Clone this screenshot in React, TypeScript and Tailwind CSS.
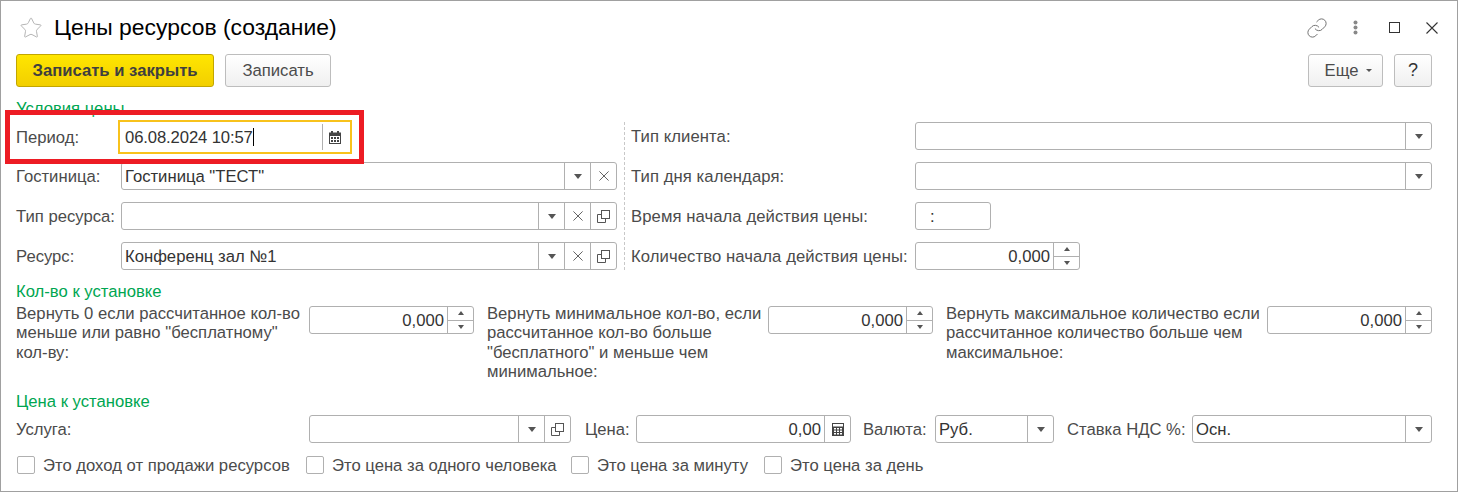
import { Link, Star } from 'lucide-react';

const Caret = () => (
  <svg width="8" height="5" viewBox="0 0 8 5">
    <path d="M0 0h8L4 5z" fill="#555" />
  </svg>
);

const Cross = ({ size, color }: { size: number; color: string }) => (
  <svg width={size} height={size} viewBox="0 0 12 12" fill="none" stroke={color} strokeWidth="1.100">
    <path d="M0.500 0.500l11 11M11.500 0.500l-11 11" />
  </svg>
);

const CopyIcon = () => (
  <svg width="13" height="13" viewBox="0 0 13 13" fill="none" stroke="#555" strokeWidth="1">
    <rect x="4.5" y="0.5" width="8" height="8" />
    <path d="M4.5 4.5h-4v8h8v-4" />
  </svg>
);

const CalendarIcon = () => (
  <svg width="12" height="13" viewBox="0 0 12 13">
    <path
      fill="#444"
      fillRule="evenodd"
      d="M2 0h2v1.500h4V0h2v1.500h2V13H0V1.500h2zM1 5v7h10V5zM2 6h2v2H2zM5 6h2v2H5zM8 6h2v2H8zM2 9h2v2H2zM5 9h2v2H5zM8 9h2v2H8z"
    />
  </svg>
);

const CalcIcon = () => (
  <svg width="12" height="13" viewBox="0 0 12 13">
    <path
      fill="#444"
      fillRule="evenodd"
      d="M0 0h12v13H0zM1 1v2.500h10V1zM2 5h2v1.500H2zM5 5h2v1.500H5zM8 5h2v1.500H8zM2 7.500h2V9H2zM5 7.500h2V9H5zM8 7.500h2V9H8zM2 10h2v1.500H2zM5 10h2v1.500H5zM8 10h2v1.500H8z"
    />
  </svg>
);

const Btn = ({ children }: { children: React.ReactNode }) => (
  <div className="w-[26px] h-full flex items-center justify-center border-l border-[#b0b0b0] shrink-0">
    {children}
  </div>
);

interface FieldProps {
  value?: string;
  className?: string;
  caret?: boolean;
  clear?: boolean;
  copy?: boolean;
}

// Обычное поле ввода с кнопками справа
const Field = ({ value, className, caret, clear, copy }: FieldProps) => (
  <div className={`h-[28px] flex items-center bg-white border border-[#b0b0b0] rounded-[3px] ${className ?? ''}`}>
    <div className="flex-1 pl-[3px] text-[#333] whitespace-nowrap overflow-hidden">{value}</div>
    {caret && <Btn><Caret /></Btn>}
    {clear && <Btn><Cross size={10} color="#555" /></Btn>}
    {copy && <Btn><CopyIcon /></Btn>}
  </div>
);

const Spin = ({ className }: { className?: string }) => (
  <div className={`h-[28px] flex items-center bg-white border border-[#b0b0b0] rounded-[3px] ${className ?? ''}`}>
    <div className="flex-1 text-right pr-[3px] text-[#333]">0,000</div>
    <div className="w-[26px] h-full border-l border-[#b0b0b0] flex flex-col shrink-0">
      <div className="flex-1 flex items-center justify-center border-b border-[#b0b0b0]">
        <svg width="6" height="4" viewBox="0 0 6 4"><path d="M0 4h6L3 0z" fill="#555" /></svg>
      </div>
      <div className="flex-1 flex items-center justify-center">
        <svg width="6" height="4" viewBox="0 0 6 4"><path d="M0 0h6L3 4z" fill="#555" /></svg>
      </div>
    </div>
  </div>
);

const Section = ({ children }: { children: React.ReactNode }) => (
  <div className="h-[16px] leading-[18px] text-[#00a651]">{children}</div>
);

const Check = ({ label, className }: { label: string; className: string }) => (
  <div className={`flex items-center h-[18px] gap-[8px] ${className}`}>
    <div className="w-[18px] h-[18px] bg-white border border-[#b0b0b0] rounded-[2px] shrink-0" />
    <span className="whitespace-nowrap">{label}</span>
  </div>
);

const LeftRow = ({ label, children }: { label: string; children: React.ReactNode }) => (
  <div className="flex items-center h-[28px]">
    <div className="w-[105px] whitespace-nowrap">{label}</div>
    {children}
  </div>
);

const RightRow = ({ label, children }: { label: string; children: React.ReactNode }) => (
  <div className="flex items-center h-[28px]">
    <div className="w-[284px] whitespace-nowrap tracking-[0.08px]">{label}</div>
    {children}
  </div>
);

const Group = ({ text, textWidth, className }: { text: string; textWidth: string; className: string }) => (
  <div className={`flex ${className}`}>
    <div className={`${textWidth} leading-[19.4px] -mt-[2px]`}>{text}</div>
    <Spin className="w-[165px] shrink-0" />
  </div>
);

export default function App() {
  return (
    <div
      className="relative w-[1458px] h-[492px] bg-white border border-[#a0a0a0] pl-[15px] pr-[25px] text-[16.67px] text-[#4b4b4b] overflow-hidden"
      style={{ fontFamily: '"Liberation Sans", Arial, sans-serif' }}
    >
      {/* Заголовок */}
      <div className="h-[53px] flex items-center">
        <Star size={24} strokeWidth={1} color="#b5b5b5" className="ml-[3px]" />
        <div className="ml-[11px] text-[22.9px] text-black whitespace-nowrap">Цены ресурсов (создание)</div>
        <div className="ml-auto mr-[-6px] flex items-center">
          <Link size={22} strokeWidth={1} color="#666" />
          <svg width="5" height="15" viewBox="0 0 5 15" fill="#888" className="ml-[25px]">
            <circle cx="2.500" cy="2.500" r="2" />
            <circle cx="2.500" cy="7.500" r="2" />
            <circle cx="2.500" cy="12.500" r="2" />
          </svg>
          <div className="w-[11px] h-[11px] border border-[#333] ml-[31px]" />
          <div className="ml-[26px]"><Cross size={12} color="#333" /></div>
        </div>
      </div>

      {/* Кнопки */}
      <div className="flex h-[33px]">
        <div className="w-[198px] flex items-center justify-center rounded-[3px] border border-[#c2a600] bg-gradient-to-b from-[#ffe600] to-[#f2cf00] font-bold text-[#3f3f3f] whitespace-nowrap">
          Записать и закрыть
        </div>
        <div className="w-[106px] ml-[11px] flex items-center justify-center rounded-[3px] border border-[#bdbdbd] bg-gradient-to-b from-white to-[#f0f0f0] text-[#4b4b4b]">
          Записать
        </div>
        <div className="w-[75px] ml-auto flex items-center justify-center gap-[8px] pl-[6px] rounded-[3px] border border-[#bdbdbd] bg-gradient-to-b from-white to-[#f0f0f0]">
          Еще
          <svg width="6" height="3" viewBox="0 0 6 3"><path d="M0 0h6L3 3z" fill="#555" /></svg>
        </div>
        <div className="w-[38px] ml-[11px] flex items-center justify-center rounded-[3px] border border-[#bdbdbd] bg-gradient-to-b from-white to-[#f0f0f0] text-[#333] text-[18px]">
          ?
        </div>
      </div>

      <div className="mt-[13px]"><Section>Условия цены</Section></div>

      <div className="flex mt-[4px]">
        <div className="w-[608px] flex flex-col">
          <div className="flex items-center h-[34px] mb-[8px]">
            <div className="w-[102px]">Период:</div>
            <div className="w-[234px] h-[34px] flex items-center border-2 border-[#f8c21c] bg-white">
              <div className="flex-1 pl-[5px] text-[#333] flex items-center whitespace-nowrap tracking-[-0.12px]">
                06.08.2024 10:57
                <span className="w-px h-[18px] bg-black" />
              </div>
              <div className="w-[26px] mr-[2px] pr-px h-[26px] border-l border-[#b0b0b0] flex items-center justify-center">
                <CalendarIcon />
              </div>
            </div>
          </div>
          <div className="flex flex-col gap-[12px]">
            <LeftRow label="Гостиница:">
              <Field value={'Гостиница "ТЕСТ"'} className="w-[496px]" caret clear />
            </LeftRow>
            <LeftRow label="Тип ресурса:">
              <Field className="w-[496px]" caret clear copy />
            </LeftRow>
            <LeftRow label="Ресурс:">
              <Field value="Конференц зал №1" className="w-[496px]" caret clear copy />
            </LeftRow>
          </div>
        </div>

        <div className="w-px h-[148px] mt-[2px] border-l border-dashed border-[#c8c8c8]" />

        <div className="flex-1 ml-[6px] pt-[2px] flex flex-col gap-[12px]">
          <RightRow label="Тип клиента:">
            <Field className="flex-1" caret />
          </RightRow>
          <RightRow label="Тип дня календаря:">
            <Field className="flex-1" caret />
          </RightRow>
          <RightRow label="Время начала действия цены:">
            <Field value=":" className="w-[76px] [&>div]:pl-[14px]" />
          </RightRow>
          <RightRow label="Количество начала действия цены:">
            <Spin className="w-[165px]" />
          </RightRow>
        </div>
      </div>

      <div className="mt-[13px]"><Section>Кол-во к установке</Section></div>

      <div className="flex h-[87px] mt-[7px]">
        <Group
          text={'Вернуть 0 если рассчитанное кол-во меньше или равно "бесплатному" кол-ву:'}
          textWidth="w-[293px]"
          className="w-[471px]"
        />
        <Group
          text={'Вернуть минимальное кол-во, если рассчитанное кол-во больше "бесплатного" и меньше чем минимальное:'}
          textWidth="w-[281px]"
          className="w-[459px]"
        />
        <Group
          text="Вернуть максимальное количество если рассчитанное количество больше чем максимальное:"
          textWidth="w-[321px]"
          className="flex-1"
        />
      </div>

      <Section>Цена к установке</Section>

      <div className="flex items-center mt-[6px]">
        <div className="w-[293px]">Услуга:</div>
        <Field className="w-[262px]" caret copy />
        <div className="ml-[14px] w-[51px] whitespace-nowrap">Цена:</div>
        <div className="w-[215px] h-[28px] flex items-center border border-[#b0b0b0] rounded-[3px]">
          <div className="flex-1 text-right pr-[3px] text-[#333]">0,00</div>
          <Btn><CalcIcon /></Btn>
        </div>
        <div className="ml-[12px] w-[72px] whitespace-nowrap">Валюта:</div>
        <Field value="Руб." className="w-[119px]" caret />
        <div className="ml-[13px] w-[125px] whitespace-nowrap">Ставка НДС %:</div>
        <Field value="Осн." className="flex-1" caret />
      </div>

      <div className="flex mt-[13px] pl-px">
        <Check label="Это доход от продажи ресурсов" className="w-[289px]" />
        <Check label="Это цена за одного человека" className="w-[265px]" />
        <Check label="Это цена за минуту" className="w-[193px]" />
        <Check label="Это цена за день" className="" />
      </div>

      {/* Красная рамка поверх формы */}
      <div className="absolute left-[4px] top-[109px] w-[359px] h-[54px] border-[5px] border-[#ed1c24]" />
    </div>
  );
}
